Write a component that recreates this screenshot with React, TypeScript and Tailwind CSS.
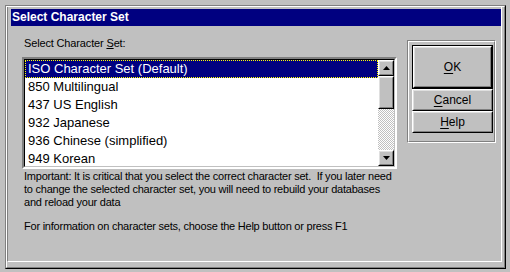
const charsets = [
  "ISO Character Set (Default)",
  "850 Multilingual",
  "437 US English",
  "932 Japanese",
  "936 Chinese (simplified)",
  "949 Korean",
];

function Raised({ className, children }: { className?: string; children?: React.ReactNode }) {
  return (
    <div className={`border border-t-white border-l-white border-r-black border-b-black ${className ?? ""}`}>
      <div className="w-full h-full border border-t-[#dfdfdf] border-l-[#dfdfdf] border-r-[#808080] border-b-[#808080] bg-[#c0c0c0] flex items-center justify-center">
        {children}
      </div>
    </div>
  );
}

function Arrow({ up }: { up?: boolean }) {
  return (
    <svg width="7" height="4" viewBox="0 0 7 4">
      {up ? <polygon points="3.5,0 7,4 0,4" fill="#000" /> : <polygon points="0,0 7,0 3.5,4" fill="#000" />}
    </svg>
  );
}

function PushButton({ label, hot, className }: { label: string; hot: string; className?: string }) {
  const rest = label.slice(hot.length);
  return (
    <Raised className={className}>
      <span className="text-[12px] leading-none">
        <span className="underline underline-offset-2">{hot}</span>
        {rest}
      </span>
    </Raised>
  );
}

export default function App() {
  return (
    <div className="w-[510px] h-[272px] bg-[#c0c0c0] pt-[5px] pl-[5px] font-['Liberation_Sans',Arial,sans-serif] text-black">
      <div className="w-[501px] h-[264px] border border-t-[#808080] border-l-[#808080] border-r-black border-b-black">
        <div className="h-full border border-t-white border-l-white border-r-[#808080] border-b-[#808080]">
          <div className="h-[255px] mr-[2px] border-l border-r border-b border-l-[#808080] border-r-white border-b-white pl-[3px] pt-[2px]">
            {/* title bar */}
            <div className="h-[17px] bg-[#000080] text-white text-[12px] font-bold leading-[17px] pl-[1px]">
              Select Character Set
            </div>

            <div className="flex items-start pl-[11px] gap-[10px]">
              <div className="w-[375px] pt-[11px]">
                <div className="text-[11px] leading-[13px] pl-[2px] tracking-[-0.15px]">
                  Select Character <span className="underline">S</span>et:
                </div>

                <div className="mt-[7px] h-[112px] border-2 border-t-[#808080] border-l-[#808080] border-r-white border-b-white">
                  <div className="h-full border border-t-black border-l-black border-r-[#c0c0c0] border-b-[#c0c0c0]">
                    <div className="h-full flex bg-white">
                      <div className="flex-1">
                        {charsets.map((c, i) => (
                          <div
                            key={c}
                            className={`h-[18px] text-[13px] leading-[16px] pl-[2px] border border-dotted ${
                              i === 0 ? "bg-[#000080] text-white border-[#ffff00]" : "border-transparent"
                            }`}
                          >
                            {c}
                          </div>
                        ))}
                      </div>
                      <div className="w-[16px] flex flex-col">
                        <Raised className="h-[16px]">
                          <Arrow up />
                        </Raised>
                        <Raised className="h-[33px]" />
                        <div className="flex-1 bg-[repeating-conic-gradient(#c0c0c0_0_25%,#ffffff_0_50%)] bg-[length:2px_2px]" />
                        <Raised className="h-[16px]">
                          <Arrow />
                        </Raised>
                      </div>
                    </div>
                  </div>
                </div>

                <div className="pl-[2px] pt-[1px] text-[11px] leading-[13px] tracking-[-0.23px] whitespace-pre">
                  <p>
                    {"Important: It is critical that you select the correct character set.  If you later need"}
                    <br />
                    to change the selected character set, you will need to rebuild your databases
                    <br />
                    and reload your data
                  </p>
                  <p className="mt-[11px]">For information on character sets, choose the Help button or press F1</p>
                </div>
              </div>

              {/* button group */}
              <div className="mt-[14px] w-[89px] h-[103px] border border-t-[#808080] border-l-[#808080] border-r-white border-b-white">
                <div className="h-full border border-t-white border-l-white border-r-[#808080] border-b-[#808080] pl-[3px] pr-[1px] pt-[3px] flex flex-col">
                  <div className="h-[44px] border border-black">
                    <PushButton label="OK" hot="O" className="h-full" />
                  </div>
                  <PushButton label="Cancel" hot="C" className="h-[22px]" />
                  <PushButton label="Help" hot="H" className="h-[22px]" />
                </div>
              </div>
            </div>
          </div>
        </div>
      </div>
    </div>
  );
}
